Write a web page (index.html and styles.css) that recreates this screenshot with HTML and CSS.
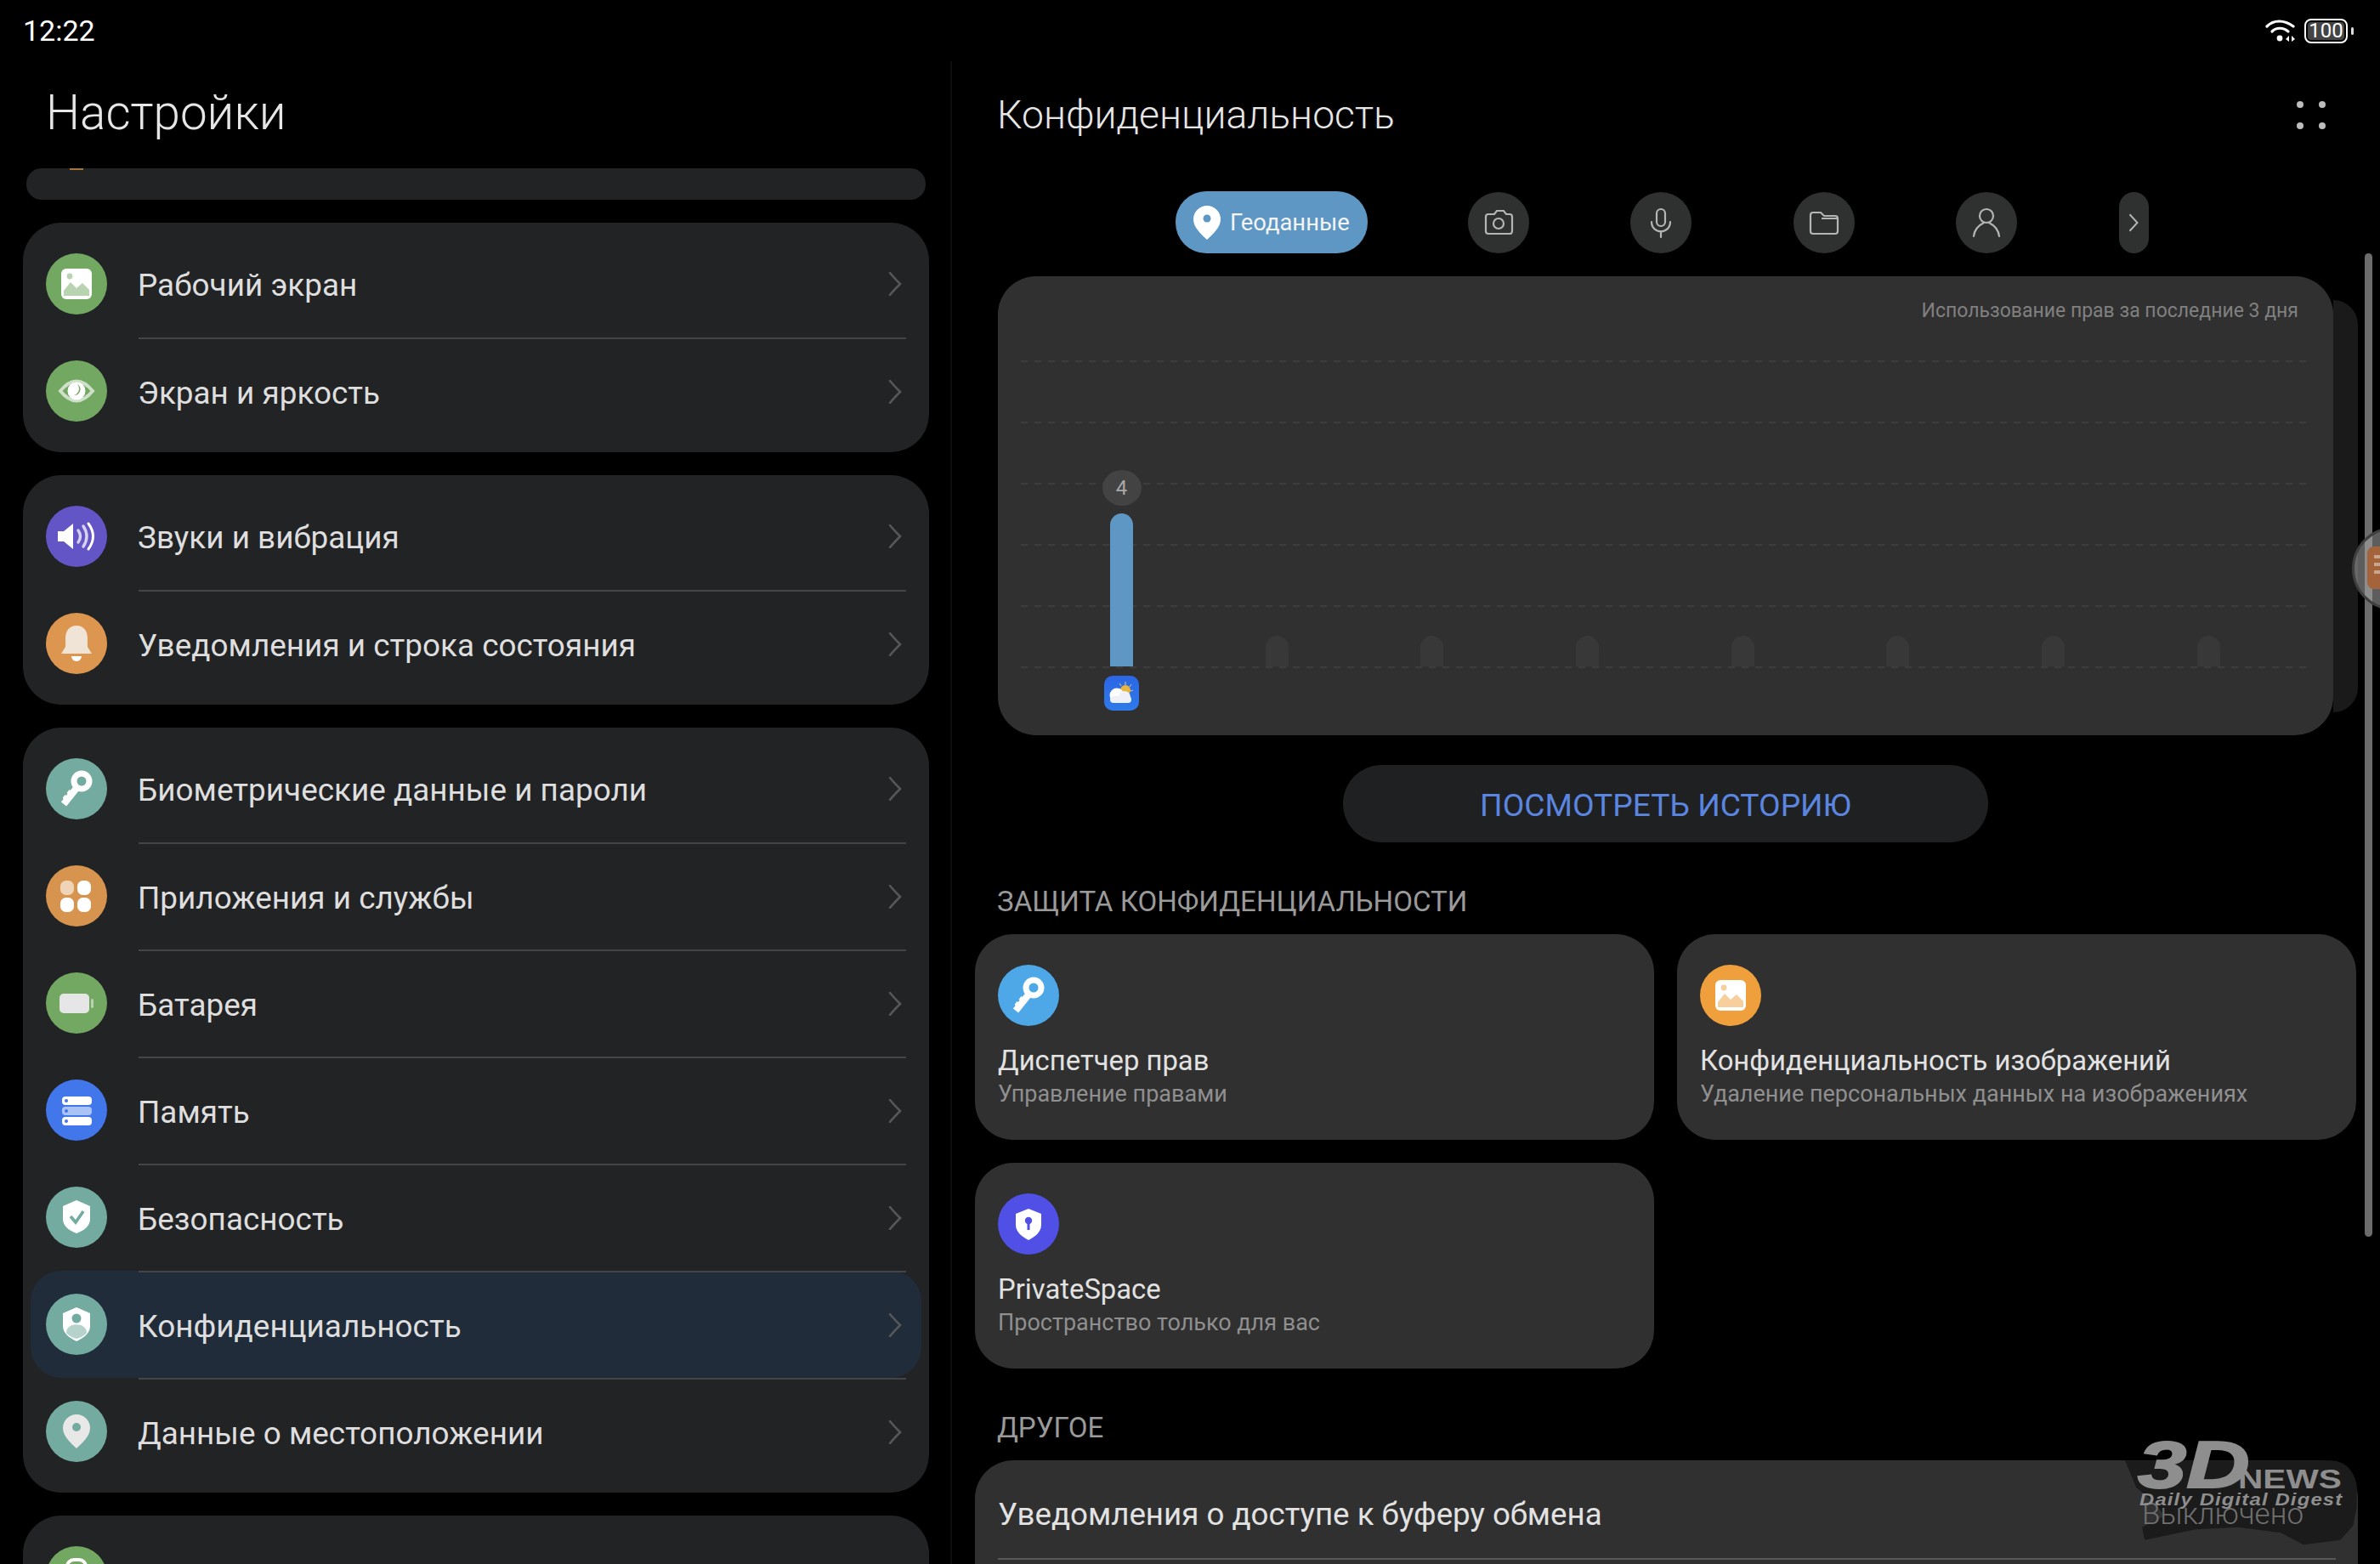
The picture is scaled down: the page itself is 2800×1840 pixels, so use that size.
FILE: index.html
```html
<!DOCTYPE html>
<html lang="ru">
<head>
    <meta charset="UTF-8">
    <title>Настройки</title>
    <link rel="stylesheet" href="styles.css">
</head>
<body>
<svg class="sprite" width="0" height="0">
    <symbol id="chevron" viewBox="0 0 16 28"><path d="M2 1 C6 6 10 10 14 14 C10 18 6 22 2 27" fill="none" stroke="currentColor" stroke-width="2.6" stroke-linecap="round"/></symbol>
    <symbol id="picture" viewBox="0 0 72 72"><rect x="18" y="18" width="36" height="36" rx="6" fill="#fff"/><circle cx="28" cy="27" r="3.4" fill="currentColor" opacity=".5"/><path d="M21 50 V44 L29 34 L36 41 L43 35 L51 43 V50 Z" fill="currentColor" opacity=".5"/></symbol>
    <symbol id="key" viewBox="0 0 72 72"><circle cx="42" cy="27" r="9" fill="none" stroke="#fff" stroke-width="7"/><path d="M37 34 L21 54" stroke="#fff" stroke-width="8"/><path d="M21 45 L28 50 M26 39 L33 44" stroke="#fff" stroke-width="5"/></symbol>
    <symbol id="pin" viewBox="0 0 72 72"><path d="M36 16 a16 16 0 0 1 16 16 c0 10 -10 18 -16 24 c-6 -6 -16 -14 -16 -24 a16 16 0 0 1 16 -16 z" fill="#e8e8e8"/><circle cx="36" cy="31" r="5" fill="currentColor"/></symbol>
</svg>

<div class="screen">
    <div class="statusbar">
        <span class="clock">12:22</span>
        <div class="status-icons">
            <svg class="wifi" width="36" height="28" viewBox="0 0 36 28" fill="none" stroke="#fff" stroke-width="3.2" stroke-linecap="round">
                <path d="M2 9 C10 1 22 1 33 9"/><path d="M8 15 C13 10 21 10 27 15"/>
                <circle cx="17" cy="23" r="3.4" fill="#fff" stroke="none"/>
                <path d="M28 20 L24 24 L28 27 Z M31 20 L35 24 L31 27 Z" fill="#fff" stroke="none"/>
            </svg>
            <div class="battery"><span class="battery-level">100</span></div>
            <span class="battery-tip"></span>
        </div>
    </div>

    <div class="panes">
        <div class="left">
            <div class="left-title">Настройки</div>
            <div class="stub"><span class="stub-dot"></span></div>

            <div class="group">
                <div class="row">
                    <span class="icon green"><svg><use href="#picture"/></svg></span>
                    <div class="row-body"><span class="row-text">Рабочий экран</span><svg class="chevron"><use href="#chevron"/></svg></div>
                </div>
                <div class="row">
                    <span class="icon green"><svg viewBox="0 0 72 72"><path d="M17 36 Q36 13 55 36 Q36 59 17 36 Z" fill="none" stroke="#cfe0c9" stroke-width="4"/><circle cx="36" cy="36" r="10.5" fill="#fff"/><path d="M37 28 A8 8 0 0 1 33 41 A7 7 0 0 0 37 28 Z" fill="currentColor"/></svg></span>
                    <div class="row-body"><span class="row-text">Экран и яркость</span><svg class="chevron"><use href="#chevron"/></svg></div>
                </div>
            </div>

            <div class="group">
                <div class="row">
                    <span class="icon purple"><svg viewBox="0 0 72 72"><path d="M14 30 h7 l11 -9 v30 l-11 -9 h-7 z" fill="#fff"/><path d="M38 29 q5 7 0 14 M44 24 q8 12 0 24" fill="none" stroke="#d6d2f0" stroke-width="3.4" stroke-linecap="round"/><path d="M50 21 q11 15 0 30" fill="none" stroke="#fff" stroke-width="3" stroke-linecap="round"/></svg></span>
                    <div class="row-body"><span class="row-text">Звуки и вибрация</span><svg class="chevron"><use href="#chevron"/></svg></div>
                </div>
                <div class="row">
                    <span class="icon bell"><svg viewBox="0 0 72 72"><path d="M36 15 c-9 0 -13 7 -13 15 v10 l-5 8 h36 l-5 -8 v-10 c0 -8 -4 -15 -13 -15 z" fill="#f0e4d6"/><path d="M30 51 h12 a6 6 0 0 1 -12 0 z" fill="#fff"/></svg></span>
                    <div class="row-body"><span class="row-text">Уведомления и строка состояния</span><svg class="chevron"><use href="#chevron"/></svg></div>
                </div>
            </div>

            <div class="group">
                <div class="row">
                    <span class="icon teal"><svg><use href="#key"/></svg></span>
                    <div class="row-body"><span class="row-text">Биометрические данные и пароли</span><svg class="chevron"><use href="#chevron"/></svg></div>
                </div>
                <div class="row">
                    <span class="icon orange"><svg viewBox="0 0 72 72" fill="#fff"><rect x="17" y="18" width="16" height="17" rx="6.5" opacity=".6"/><rect x="37" y="18" width="16" height="17" rx="6.5"/><rect x="17" y="38" width="16" height="17" rx="6.5"/><rect x="37" y="38" width="16" height="17" rx="6.5"/></svg></span>
                    <div class="row-body"><span class="row-text">Приложения и службы</span><svg class="chevron"><use href="#chevron"/></svg></div>
                </div>
                <div class="row">
                    <span class="icon green"><svg viewBox="0 0 72 72"><rect x="16" y="25" width="35" height="23" rx="5" fill="#e6e6e6"/><rect x="53" y="31" width="3" height="11" rx="1.5" fill="#b9d3b0"/></svg></span>
                    <div class="row-body"><span class="row-text">Батарея</span><svg class="chevron"><use href="#chevron"/></svg></div>
                </div>
                <div class="row">
                    <span class="icon blue"><svg viewBox="0 0 72 72"><rect x="19" y="20" width="35" height="10" rx="4" fill="#fff"/><rect x="19" y="32" width="35" height="10" rx="4" fill="#a9c3f6"/><rect x="19" y="44" width="35" height="10" rx="4" fill="#fff"/><circle cx="24" cy="25" r="2" fill="currentColor"/><circle cx="24" cy="37" r="2" fill="currentColor"/><circle cx="24" cy="49" r="2" fill="currentColor"/></svg></span>
                    <div class="row-body"><span class="row-text">Память</span><svg class="chevron"><use href="#chevron"/></svg></div>
                </div>
                <div class="row">
                    <span class="icon teal"><svg viewBox="0 0 72 72"><path d="M36 16 L52 23 V38 C52 47 44 52 36 55 C28 52 20 47 20 38 V23 Z" fill="#fff"/><path d="M29 35 L35 42 L44 29" fill="none" stroke="currentColor" stroke-width="3.6"/></svg></span>
                    <div class="row-body"><span class="row-text">Безопасность</span><svg class="chevron"><use href="#chevron"/></svg></div>
                </div>
                <div class="row active">
                    <span class="icon teal"><svg viewBox="0 0 72 72"><path d="M36 16 L52 23 V38 C52 47 44 52 36 56 C28 52 20 47 20 38 V23 Z" fill="#fff"/><circle cx="36" cy="29" r="5.5" fill="currentColor"/><path d="M24 46 C24 33 48 33 48 46 C46 49 40 52 36 53 C32 52 26 49 24 46 Z" fill="#b5d2cb"/></svg></span>
                    <div class="row-body"><span class="row-text">Конфиденциальность</span><svg class="chevron"><use href="#chevron"/></svg></div>
                </div>
                <div class="row">
                    <span class="icon teal"><svg><use href="#pin"/></svg></span>
                    <div class="row-body"><span class="row-text">Данные о местоположении</span><svg class="chevron"><use href="#chevron"/></svg></div>
                </div>
            </div>

            <div class="group">
                <div class="row">
                    <span class="icon green"><svg viewBox="0 0 72 72"><rect x="25" y="16" width="22" height="38" rx="8" fill="none" stroke="#fff" stroke-width="4"/></svg></span>
                    <div class="row-body"></div>
                </div>
            </div>
        </div>

        <div class="right">
            <div class="right-head">
                <span class="right-title">Конфиденциальность</span>
                <div class="more-dots"><i></i><i></i><i></i><i></i></div>
            </div>

            <div class="tabs">
                <div class="tab-active">
                    <svg width="34" height="40" viewBox="19 16 34 40"><path d="M36 16 a16 16 0 0 1 16 16 c0 10 -10 18 -16 24 c-6 -6 -16 -14 -16 -24 a16 16 0 0 1 16 -16 z" fill="#fff"/><circle cx="36" cy="31" r="4.5" fill="#5e97c4"/></svg>
                    <span>Геоданные</span>
                </div>
                <div class="tab"><svg viewBox="0 0 72 72" fill="none" stroke="#b5b5b5" stroke-width="2.2"><path d="M21 29 a3 3 0 0 1 3 -3 h7 l3 -4 h8 l3 4 h4 a3 3 0 0 1 3 3 v17 a3 3 0 0 1 -3 3 h-25 a3 3 0 0 1 -3 -3 z"/><circle cx="36" cy="37" r="6"/></svg></div>
                <div class="tab"><svg viewBox="0 0 72 72" fill="none" stroke="#b5b5b5" stroke-width="2.2" stroke-linecap="round"><rect x="31" y="20" width="10" height="20" rx="5"/><path d="M25 35 c0 15 22 15 22 0 M36 46 V53"/></svg></div>
                <div class="tab"><svg viewBox="0 0 72 72" fill="none" stroke="#b5b5b5" stroke-width="2.2"><path d="M20 27 a3 3 0 0 1 3 -3 h9 l4 4 h13 a3 3 0 0 1 3 3 v15 a3 3 0 0 1 -3 3 h-26 a3 3 0 0 1 -3 -3 z"/><path d="M33 31 h19" stroke-width="2"/></svg></div>
                <div class="tab"><svg viewBox="0 0 72 72" fill="none" stroke="#b5b5b5" stroke-width="2.2" stroke-linecap="round"><circle cx="36" cy="28" r="8"/><path d="M21 52 C22 42 29 38 33 36 M51 52 C50 42 43 38 39 36"/></svg></div>
                <div class="tab-more"><svg width="12" height="22" viewBox="0 0 16 28"><path d="M2 1 L14 14 L2 27" fill="none" stroke="#b5b5b5" stroke-width="2.6"/></svg></div>
            </div>

            <div class="chart-row">
                <div class="chart-card">
                    <div class="chart-caption">Использование прав за последние 3 дня</div>
                    <div class="plot">
                        <div class="gridlines"><i></i><i></i><i></i><i></i><i></i><i></i></div>
                        <div class="bars">
                            <div class="bar-col"><span class="bar-badge">4</span><span class="bar main-bar"></span></div>
                            <div class="bar-col"><span class="bar empty-bar"></span></div>
                            <div class="bar-col"><span class="bar empty-bar"></span></div>
                            <div class="bar-col"><span class="bar empty-bar"></span></div>
                            <div class="bar-col"><span class="bar empty-bar"></span></div>
                            <div class="bar-col"><span class="bar empty-bar"></span></div>
                            <div class="bar-col"><span class="bar empty-bar"></span></div>
                            <div class="bar-col"><span class="bar empty-bar"></span></div>
                        </div>
                    </div>
                    <div class="plot-apps">
                        <svg class="app-icon" viewBox="0 0 41 41">
                            <g stroke="#d8c98a" stroke-width="1"><path d="M25 7 V11 M18 9 L20 12 M32 10 L30 13 M34 17 L31 18"/></g>
                            <circle cx="25" cy="17" r="6" fill="#e8b63f"/>
                            <circle cx="15" cy="23" r="8.5" fill="#fff"/><circle cx="24" cy="25" r="7" fill="#eef2f8"/>
                            <rect x="7" y="24" width="25" height="8" rx="4" fill="#eef2f8"/>
                        </svg>
                    </div>
                </div>
                <div class="chart-peek"></div>
            </div>

            <div class="history-btn">ПОСМОТРЕТЬ ИСТОРИЮ</div>

            <div class="section-label protect-label">ЗАЩИТА КОНФИДЕНЦИАЛЬНОСТИ</div>
            <div class="tiles">
                <div class="tile">
                    <span class="icon sky"><svg><use href="#key"/></svg></span>
                    <div class="tile-title">Диспетчер прав</div>
                    <div class="tile-sub">Управление правами</div>
                </div>
                <div class="tile">
                    <span class="icon amber"><svg><use href="#picture"/></svg></span>
                    <div class="tile-title">Конфиденциальность изображений</div>
                    <div class="tile-sub">Удаление персональных данных на изображениях</div>
                </div>
                <div class="tile">
                    <span class="icon violet"><svg viewBox="0 0 72 72"><path d="M36 18 L51 24 V37 C51 46 43 51 36 55 C29 51 21 46 21 37 V24 Z" fill="#fff"/><circle cx="36" cy="32" r="4.2" fill="currentColor"/><rect x="34.5" y="33" width="3" height="10" fill="currentColor"/></svg></span>
                    <div class="tile-title">PrivateSpace</div>
                    <div class="tile-sub">Пространство только для вас</div>
                </div>
            </div>

            <div class="section-label other-label">ДРУГОЕ</div>
            <div class="other-card">
                <div class="other-row">
                    <span>Уведомления о доступе к буферу обмена</span>
                    <span class="other-value">Выключено</span>
                </div>
            </div>
        </div>
    </div>

    <div class="scrollbar"></div>
    <div class="float-ball"><div class="float-app"><i></i><i></i><i></i></div></div>

    <div class="watermark">
        <svg class="brush" width="500" height="200" viewBox="0 0 1500 600"><path d="M600 235 L1330 235 Q1400 240 1418 320 L1418 400 L1405 465 L1360 515 L1230 532 L1150 490 L1000 470 L850 478 L670 515 L660 470 L740 430 L700 380 L640 330 Z" fill="#1b1b1b"/></svg>
        <span class="wm-3d">3D</span>
        <span class="wm-news">NEWS</span>
        <span class="wm-digest">Daily Digital Digest</span>
    </div>
</div>
</body>
</html>
```

FILE: styles.css
```css
body {
    margin: 0;
    background-color: #000;
    font-family: Roboto, "Noto Sans", sans-serif;
}
.sprite {
    position: absolute;
}
.screen {
    position: relative;
    width: 2800px;
    height: 1840px;
    overflow: hidden;
    display: flex;
    flex-direction: column;
    background-color: #000;
}
.statusbar {
    height: 72px;
    flex-shrink: 0;
    display: flex;
    justify-content: space-between;
    align-items: center;
    padding: 0 31px 0 27px;
}
.clock {
    font-size: 34px;
    color: #fff;
}
.status-icons {
    display: flex;
    align-items: center;
}
.wifi {
    margin-right: 10px;
}
.battery {
    width: 51px;
    height: 29px;
    box-sizing: border-box;
    border: 2px solid #fff;
    border-radius: 8px;
    padding: 2px;
}
.battery-level {
    display: block;
    height: 100%;
    background-color: #444;
    border-radius: 4px;
    color: #fff;
    font-size: 24px;
    line-height: 21px;
    text-align: center;
}
.battery-tip {
    width: 3px;
    height: 9px;
    margin-left: 4px;
    background-color: #ddd;
    border-radius: 2px;
}
.panes {
    flex: 1;
    min-height: 0;
    display: flex;
}
.left {
    width: 1118px;
    flex-shrink: 0;
    border-right: 2px solid #0e0e0e;
    overflow: hidden;
}
.left-title {
    height: 126px;
    box-sizing: border-box;
    padding: 27px 0 0 54px;
    font-size: 56.6px;
    line-height: 68px;
    font-weight: 300;
    color: #e6e6e6;
}
.stub {
    height: 37px;
    margin: 0 29px 27px 31px;
    border-radius: 18px;
    background-color: #222325;
    overflow: hidden;
}
.stub-dot {
    display: block;
    width: 16px;
    height: 2px;
    margin-left: 51px;
    background-color: #a5733e;
}
.group {
    margin: 0 25px 27px 27px;
    padding: 9px 0;
    border-radius: 45px;
    background-color: #222325;
}
.row {
    height: 126px;
    display: flex;
    align-items: center;
    padding: 0 27px;
    font-size: 36.9px;
    color: #dedede;
}
.row.active {
    margin: 0 9px;
    padding: 0 18px;
    border-radius: 36px;
    background-color: #202c3a;
}
.row-body {
    flex: 1;
    align-self: stretch;
    margin-left: 37px;
    padding-right: 5px;
    display: flex;
    justify-content: space-between;
    align-items: center;
}
.row-text {
    margin-left: -1px;
    padding-top: 2px;
}
.row + .row .row-body {
    border-top: 2px solid #434547;
}
.chevron {
    width: 16px;
    height: 28px;
    color: #55575a;
}
.icon {
    width: 72px;
    height: 72px;
    flex-shrink: 0;
    display: block;
    border-radius: 50%;
}
.icon svg {
    display: block;
    width: 72px;
    height: 72px;
}
.green { background-color: #72a862; color: #72a862; }
.purple { background-color: #6355c6; color: #6355c6; }
.bell { background-color: #dc964f; color: #dc964f; }
.teal { background-color: #74aba0; color: #74aba0; }
.orange { background-color: #d6944e; color: #d6944e; }
.blue { background-color: #4276eb; color: #4276eb; }
.sky { background-color: #4ea8e8; color: #4ea8e8; }
.amber { background-color: #ef9f3c; color: #ef9f3c; }
.violet { background-color: #5150e6; color: #5150e6; }

.right {
    flex: 1;
    min-width: 0;
    padding: 0 26px 0 27px;
}
.right-head {
    height: 153px;
    display: flex;
    justify-content: space-between;
    align-items: center;
    padding: 0 38px 27px 26px;
    box-sizing: border-box;
}
.right-title {
    font-size: 46.3px;
    font-weight: 300;
    color: #e6e6e6;
}
.more-dots {
    width: 34px;
    display: grid;
    grid-template-columns: 8px 8px;
    justify-content: space-between;
    row-gap: 17px;
}
.more-dots i {
    width: 8px;
    height: 8px;
    border-radius: 50%;
    background-color: #bdbdbd;
}
.tabs {
    height: 73px;
    margin-left: 236px;
    display: flex;
    align-items: center;
    gap: 119.5px;
}
.tab-active {
    width: 226px;
    height: 73px;
    margin-right: -2px;
    box-sizing: border-box;
    padding-left: 20px;
    display: flex;
    align-items: center;
    gap: 10px;
    border-radius: 36px;
    background-color: #5e97c4;
    color: #f4f4f4;
    font-size: 27.4px;
}
.tab {
    width: 72px;
    height: 72px;
    border-radius: 50%;
    background-color: #2f3030;
}
.tab svg {
    display: block;
    width: 72px;
    height: 72px;
}
.tab-more {
    width: 35px;
    height: 72px;
    display: flex;
    align-items: center;
    justify-content: center;
    border-radius: 18px;
    background-color: #2f3030;
}
.chart-row {
    display: flex;
    align-items: center;
    margin: 27px 0 0 27px;
}
.chart-card {
    width: 1571px;
    height: 540px;
    box-sizing: border-box;
    padding: 24px 32px 0 27px;
    border-radius: 45px;
    background-color: #303030;
}
.chart-peek {
    width: 29px;
    height: 485px;
    border-radius: 0 30px 30px 0;
    background-color: #1a1a1a;
}
.chart-caption {
    padding-right: 9px;
    text-align: right;
    font-size: 23px;
    line-height: 34px;
    color: #808080;
}
.plot {
    position: relative;
    height: 362px;
    margin-top: 41px;
}
.gridlines {
    position: absolute;
    top: 0;
    left: 0;
    right: 0;
    bottom: 0;
    display: flex;
    flex-direction: column;
    justify-content: space-between;
}
.gridlines i {
    height: 2px;
    background-image: repeating-linear-gradient(90deg, #3d3d3d 0 8px, transparent 8px 16px);
}
.bars {
    position: relative;
    height: 360px;
    padding-left: 105px;
    display: flex;
    gap: 155.7px;
}
.bar-col {
    width: 27px;
    display: flex;
    flex-direction: column;
    justify-content: flex-end;
    align-items: center;
}
.bar {
    width: 27px;
    flex-shrink: 0;
    border-radius: 14px 14px 0 0;
}
.main-bar {
    height: 180px;
    background-color: #5e97c4;
}
.empty-bar {
    height: 36px;
    background-color: #383838;
}
.bar-badge {
    width: 46px;
    height: 42px;
    flex-shrink: 0;
    margin-bottom: 9px;
    border-radius: 50%;
    background-color: #434343;
    color: #a8a8a8;
    font-size: 24px;
    line-height: 42px;
    text-align: center;
}
.plot-apps {
    margin-top: 9px;
    padding-left: 98px;
}
.app-icon {
    display: block;
    width: 41px;
    height: 41px;
    border-radius: 10px;
    background-image: linear-gradient(#2b66e6, #2f7ae8);
}
.history-btn {
    width: 759px;
    height: 91px;
    margin: 35px 0 0 433px;
    border-radius: 46px;
    background-color: #1f2021;
    color: #5b86e0;
    font-size: 37.2px;
    line-height: 95px;
    text-align: center;
}
.section-label {
    margin-left: 26px;
    font-size: 33.1px;
    line-height: 40px;
    color: #9a9a9a;
}
.protect-label {
    margin-top: 50px;
    margin-bottom: 18px;
}
.other-label {
    margin-top: 50px;
    margin-bottom: 18px;
}
.tiles {
    display: grid;
    grid-template-columns: 799px 799px;
    grid-auto-rows: 242px;
    gap: 27px;
}
.tile {
    box-sizing: border-box;
    padding: 36px 27px 0;
    border-radius: 45px;
    background-color: #303030;
}
.tile-title {
    margin-top: 19px;
    font-size: 32.8px;
    line-height: 44px;
    color: #e2e2e2;
}
.tile-sub {
    font-size: 27px;
    line-height: 34px;
    color: #8f8f8f;
}
.other-card {
    height: 200px;
    padding: 0 26px 0 27px;
    border-radius: 45px 45px 0 0;
    background-color: #303030;
}
.other-row {
    height: 117px;
    box-sizing: border-box;
    padding: 12px 38px 0 0;
    display: flex;
    justify-content: space-between;
    align-items: center;
    border-bottom: 2px solid #585858;
    font-size: 36.7px;
    color: #e2e2e2;
}
.other-value {
    position: relative;
    z-index: 1;
    font-size: 35px;
    font-weight: 300;
    color: #707070;
}

.scrollbar {
    position: absolute;
    left: 2782px;
    top: 298px;
    width: 9px;
    height: 1157px;
    border-radius: 5px;
    background-color: #6c6c6c;
}
.float-ball {
    position: absolute;
    left: 2767px;
    top: 620px;
    width: 98px;
    height: 98px;
    box-sizing: border-box;
    padding: 20px 0 0 15px;
    border-radius: 50%;
    border: 3px solid #3f3f3f;
    background-color: rgba(170, 170, 170, 0.55);
}
.float-app {
    width: 50px;
    height: 50px;
    box-sizing: border-box;
    padding: 10px 0 0 8px;
    border-radius: 8px;
    background-color: #a4633a;
}
.float-app i {
    display: block;
    height: 4px;
    margin-bottom: 5px;
    background-color: #c9a68f;
}
.watermark {
    position: absolute;
    left: 2300px;
    top: 1640px;
    width: 500px;
    height: 200px;
}
.brush {
    display: block;
}
.wm-3d, .wm-news, .wm-digest {
    position: absolute;
    z-index: 2;
    font-family: "Liberation Sans", sans-serif;
    font-weight: bold;
    color: #8e8e8e;
    transform-origin: left top;
    white-space: nowrap;
}
.wm-3d {
    left: 215px;
    top: 44px;
    font-size: 78px;
    line-height: 78px;
    font-style: italic;
    -webkit-text-stroke: 2px #8e8e8e;
    transform: scaleX(1.32);
}
.wm-news {
    left: 333px;
    top: 85px;
    font-size: 31px;
    line-height: 31px;
    transform: scaleX(1.31);
}
.wm-digest {
    left: 217px;
    top: 112px;
    font-size: 20px;
    line-height: 24px;
    font-style: italic;
    letter-spacing: 1px;
    transform: scaleX(1.19);
}
```
